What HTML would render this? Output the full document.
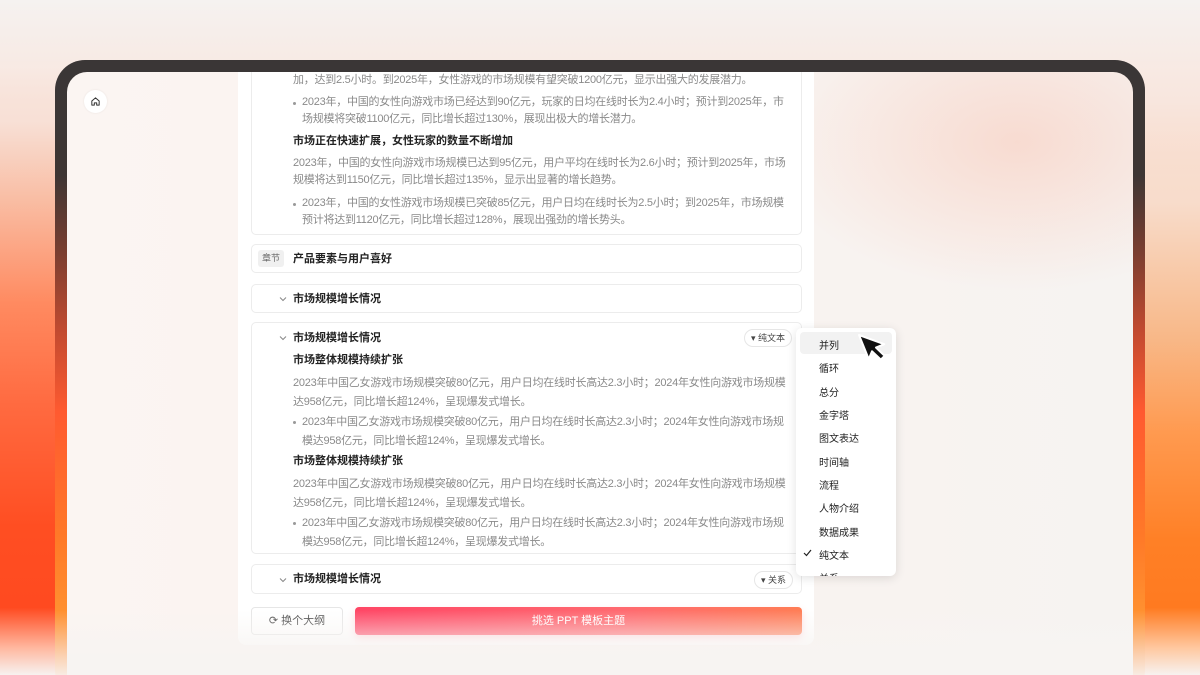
<!DOCTYPE html>
<html><head><meta charset="utf-8"><style>
*{box-sizing:border-box;margin:0;padding:0}
html,body{width:1200px;height:675px;overflow:hidden}
body{position:relative;font-family:"Liberation Sans","Noto Sans CJK SC",sans-serif;
background:linear-gradient(180deg,#f5f2f0 0%,#f8e8e1 12%,#f9e0d4 25%,#f7ece7 60%,#f6f2ef 100%);}
.sl{position:absolute;left:0;top:0;width:60px;height:675px;background:linear-gradient(180deg,rgba(248,232,225,0) 10%,#f8e0d6 18%,#f9bca2 30%,#ff8a60 45%,#ff6a40 60%,#ff4e22 78%,#ff4a20 90%,#ffb8a0 96%,#f7f2f0 100%);}
.sr{position:absolute;right:0;top:0;width:60px;height:675px;background:linear-gradient(180deg,rgba(248,232,225,0) 15%,#f8dccb 30%,#f8b888 50%,#ff9a50 64%,#ff8026 80%,#ff7a20 90%,#ffc8a0 96%,#f7f2f0 100%);}
.frame{position:absolute;left:55px;top:60px;width:1090px;height:640px;border-radius:30px;
background:linear-gradient(180deg,#3a3636 0%,#3e3634 18%,#7a3e30 30%,#c04a30 42%,#ff5a30 55%,#ff7a28 75%,#ff9030 86%,#fbd0b0 93%,#f7f4f2 97%);}
.screen{position:absolute;left:67px;top:72px;width:1066px;height:620px;border-radius:20px 20px 0 0;overflow:hidden;
background:linear-gradient(90deg,#fbf5f2 0%,#fbf3ef 40%,#f6f3f1 100%);}
.screen:before{content:"";position:absolute;left:700px;top:-80px;width:500px;height:300px;background:radial-gradient(ellipse,rgba(250,190,170,.45),rgba(250,190,170,0) 70%);}
.bottomfade{position:absolute;left:67px;top:610px;width:1066px;height:65px;background:linear-gradient(180deg,rgba(247,244,242,0),#f7f4f2 75%);}
.home{position:absolute;left:17px;top:18px;width:23px;height:23px;border-radius:50%;background:#fff;box-shadow:0 0 2px rgba(0,0,0,.08);display:flex;align-items:center;justify-content:center}
.panel{position:absolute;left:171px;top:0;width:576px;height:573px;background:#fff;border-radius:0 0 8px 8px}
.card{position:absolute;left:13px;width:551px;border:1px solid #ececec;border-radius:5px;background:#fff}
.t{font-size:11px;color:#8a8a8a;line-height:19px;letter-spacing:-0.25px}
.h{font-size:11px;color:#222;font-weight:bold;line-height:19px}
.p{position:absolute;left:41px;width:497px}
.b{position:absolute;left:41px;width:497px;padding-left:9px}
.b:before{content:"";position:absolute;left:0;top:8px;width:3px;height:3px;border-radius:50%;background:#999}
.c1 .t{line-height:17px}
.chev{position:absolute;left:27px}
.tag{position:absolute;font-size:9px;color:#444;background:#fff;border:1px solid #e6e6e6;border-radius:9px;padding:1px 6px;line-height:14px}
.menu{position:absolute;left:796px;top:328px;width:100px;height:248px;background:#fff;border-radius:6px;box-shadow:0 2px 10px rgba(0,0,0,.12);overflow:hidden}
.mi{position:absolute;left:23px;font-size:10px;color:#222}
</style></head><body>
<div class="sl"></div><div class="sr"></div>
<div class="frame"></div>
<div class="screen">
 <div class="home"><svg width="11" height="11" viewBox="0 0 12 12"><path d="M2 5.5L6 2l4 3.5V10H7.3V7.5H4.7V10H2z" fill="none" stroke="#333" stroke-width="1.1" stroke-linejoin="round"/></svg></div>
 <div class="panel">
  <div class="card c1" style="top:-20px;height:183px;border-top:none">
   <div class="p t" style="top:20px">加，达到2.5小时。到2025年，女性游戏的市场规模有望突破1200亿元，显示出强大的发展潜力。</div>
   <div class="b t" style="top:42px">2023年，中国的女性向游戏市场已经达到90亿元，玩家的日均在线时长为2.4小时；预计到2025年，市场规模将突破1100亿元，同比增长超过130%，展现出极大的增长潜力。</div>
   <div class="p h" style="top:80px">市场正在快速扩展，女性玩家的数量不断增加</div>
   <div class="p t" style="top:103px">2023年，中国的女性向游戏市场规模已达到95亿元，用户平均在线时长为2.6小时；预计到2025年，市场规模将达到1150亿元，同比增长超过135%，显示出显著的增长趋势。</div>
   <div class="b t" style="top:143px">2023年，中国的女性游戏市场规模已突破85亿元，用户日均在线时长为2.5小时；到2025年，市场规模预计将达到1120亿元，同比增长超过128%，展现出强劲的增长势头。</div>
  </div>
  <div class="card" style="top:172px;height:29px">
   <div style="position:absolute;left:6px;top:5px;background:#f0f0f0;border-radius:3px;font-size:9px;color:#666;padding:2px 4px;line-height:13px">章节</div>
   <div class="h" style="position:absolute;left:41px;top:5px">产品要素与用户喜好</div>
  </div>
  <div class="card" style="top:212px;height:29px">
   <svg class="chev" style="top:11px" width="8" height="6" viewBox="0 0 8 6"><path d="M1 1.5l3 3 3-3" fill="none" stroke="#888" stroke-width="1"/></svg>
   <div class="h" style="position:absolute;left:41px;top:5px">市场规模增长情况</div>
  </div>
  <div class="card" style="top:250px;height:232px">
   <svg class="chev" style="top:12px" width="8" height="6" viewBox="0 0 8 6"><path d="M1 1.5l3 3 3-3" fill="none" stroke="#888" stroke-width="1"/></svg>
   <div class="h" style="position:absolute;left:41px;top:6px">市场规模增长情况</div>
   <div class="tag" style="left:492px;top:6px">▾ 纯文本</div>
   <div class="p h" style="top:28px">市场整体规模持续扩张</div>
   <div class="p t" style="top:51px">2023年中国乙女游戏市场规模突破80亿元，用户日均在线时长高达2.3小时；2024年女性向游戏市场规模达958亿元，同比增长超124%，呈现爆发式增长。</div>
   <div class="b t" style="top:90px">2023年中国乙女游戏市场规模突破80亿元，用户日均在线时长高达2.3小时；2024年女性向游戏市场规模达958亿元，同比增长超124%，呈现爆发式增长。</div>
   <div class="p h" style="top:129px">市场整体规模持续扩张</div>
   <div class="p t" style="top:152px">2023年中国乙女游戏市场规模突破80亿元，用户日均在线时长高达2.3小时；2024年女性向游戏市场规模达958亿元，同比增长超124%，呈现爆发式增长。</div>
   <div class="b t" style="top:191px">2023年中国乙女游戏市场规模突破80亿元，用户日均在线时长高达2.3小时；2024年女性向游戏市场规模达958亿元，同比增长超124%，呈现爆发式增长。</div>
  </div>
  <div class="card" style="top:492px;height:30px">
   <svg class="chev" style="top:12px" width="8" height="6" viewBox="0 0 8 6"><path d="M1 1.5l3 3 3-3" fill="none" stroke="#888" stroke-width="1"/></svg>
   <div class="h" style="position:absolute;left:41px;top:5px">市场规模增长情况</div>
   <div class="tag" style="left:502px;top:6px">▾ 关系</div>
  </div>
  <div style="position:absolute;left:13px;top:535px;width:92px;height:28px;border:1px solid #e6e6e6;border-radius:4px;font-size:11px;color:#444;text-align:center;line-height:26px;background:#fff">⟳ 换个大纲</div>
  <div style="position:absolute;left:117px;top:535px;width:447px;height:28px;border-radius:4px;background:linear-gradient(90deg,#ff4665,#ff6a70 60%,#ff7d55);box-shadow:0 4px 8px rgba(255,90,110,.25);font-size:11px;color:#fff;text-align:center;line-height:28px">挑选 PPT 模板主题</div>
 </div>
</div>
<div class="bottomfade"></div>
<div class="menu">
 <div style="position:absolute;left:4px;top:4px;width:92px;height:22px;background:#f2f2f2;border-radius:4px"></div>
 <div class="mi" style="top:9px">并列</div><div class="mi" style="top:32px">循环</div><div class="mi" style="top:56px">总分</div><div class="mi" style="top:79px">金字塔</div><div class="mi" style="top:102px">图文表达</div><div class="mi" style="top:126px">时间轴</div><div class="mi" style="top:149px">流程</div><div class="mi" style="top:172px">人物介绍</div><div class="mi" style="top:196px">数据成果</div><div class="mi" style="top:219px">纯文本</div>
 <svg style="position:absolute;left:7px;top:221px" width="9" height="8" viewBox="0 0 9 8"><path d="M1 4l2.5 2.5L8 1" fill="none" stroke="#222" stroke-width="1.2"/></svg>
 <div class="mi" style="top:242px">关系</div>
</div>
<svg style="position:absolute;left:852px;top:330px" width="42" height="42" viewBox="0 0 42 42"><path d="M7 5L7 31L13 25L18 36L23 34L18 23L27 23Z" fill="#111" stroke="#fff" stroke-width="2" stroke-linejoin="round" transform="rotate(-22 7 5)"/></svg>
</body></html>
